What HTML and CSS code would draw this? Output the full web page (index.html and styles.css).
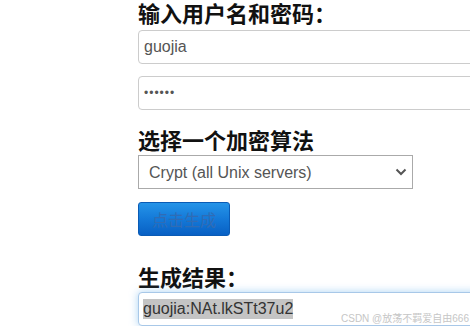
FILE: index.html
```html
<!DOCTYPE html>
<html lang="zh-CN">
<head>
<meta charset="utf-8">
<title>htpasswd</title>
<link rel="stylesheet" href="styles.css">
</head>
<body>
<main class="form">
  <h3 class="title t1">输入用户名和密码：</h3>
  <input class="field first" type="text" value="guojia">
  <input class="field f2" type="password" value="123456">
  <h3 class="title t2">选择一个加密算法</h3>
  <div class="select-wrap">
    <select class="algo">
      <option>Crypt (all Unix servers)</option>
    </select>
    <svg class="chev" width="12" height="8" viewBox="0 0 12 8"><path d="M1.5 1.5 L6 6 L10.5 1.5" fill="none" stroke="#555" stroke-width="2"/></svg>
  </div>
  <button class="btn" type="button">点击生成</button>
  <h3 class="title t3">生成结果：</h3>
  <div class="field result"><span class="sel">guojia:NAt.lkSTt37u2</span></div>
</main>
<div class="watermark">CSDN @放荡不羁爱自由666</div>
</body>
</html>
```
FILE: styles.css
```css
html, body {
  margin: 0;
  padding: 0;
  overflow: hidden;
  background: #fff;
}
body {
  width: 470px;
  height: 331px;
  position: relative;
}
.form {
  display: flex;
  flex-direction: column;
  align-items: flex-start;
  padding-left: 138px;
  width: 332px;
  overflow: hidden;
}
.title {
  margin: 0;
  font-family: "Noto Sans CJK SC", "Microsoft YaHei", sans-serif;
  font-weight: 700;
  font-size: 22px;
  line-height: 26px;
  color: #111;
  white-space: nowrap;
}
.t1 {
  margin-top: 1px;
  line-height: 22px;
}
.t2 { margin-top: 16px; }
.t3 { margin-top: 27px; }
.field {
  box-sizing: border-box;
  width: 360px;
  height: 34px;
  margin: 4px 0 0;
  padding: 0 5px;
  border: 1px solid #ccc;
  border-radius: 4px;
  font-family: "Liberation Sans", Arial, sans-serif;
  font-size: 16px;
  color: #555;
  background: #fff;
  outline: none;
  flex-shrink: 0;
}
.first { margin-top: 7px; }
.f2 {
  margin-top: 12px;
  font-size: 12px;
  letter-spacing: 1px;
}
.select-wrap {
  position: relative;
  margin-top: 3px;
}
.algo {
  appearance: none;
  -webkit-appearance: none;
  box-sizing: border-box;
  width: 275px;
  height: 34px;
  padding: 0 10px;
  border: 1px solid #aaa;
  border-radius: 0;
  background: #fff;
  font-family: "Liberation Sans", Arial, sans-serif;
  font-size: 16px;
  color: #555;
  outline: none;
}
.chev {
  position: absolute;
  right: 6px;
  top: 13px;
  pointer-events: none;
}
.btn {
  box-sizing: border-box;
  margin-top: 13px;
  width: 92px;
  height: 34px;
  padding: 0;
  border: 1px solid #0a5bb5;
  border-radius: 3px;
  background: linear-gradient(to bottom, #2594e8 0%, #1479d8 50%, #0860c4 100%);
  font-family: "Noto Sans CJK SC", "Microsoft YaHei", sans-serif;
  font-size: 16px;
  color: #2f6cb5;
}
.result {
  display: flex;
  align-items: center;
  margin-top: 3px;
  border-color: #a8c8e8;
  box-shadow: 0 0 8px rgba(102, 175, 233, 0.55);
  padding-left: 4px;
}
.sel {
  background: #c4c4c4;
  color: #333;
  line-height: 20px;
}
.watermark {
  position: absolute;
  left: 341px;
  top: 312px;
  font-family: "Liberation Sans", "Noto Sans CJK SC", sans-serif;
  font-size: 10px;
  line-height: 14px;
  color: #c6c6c6;
  white-space: nowrap;
}
```
